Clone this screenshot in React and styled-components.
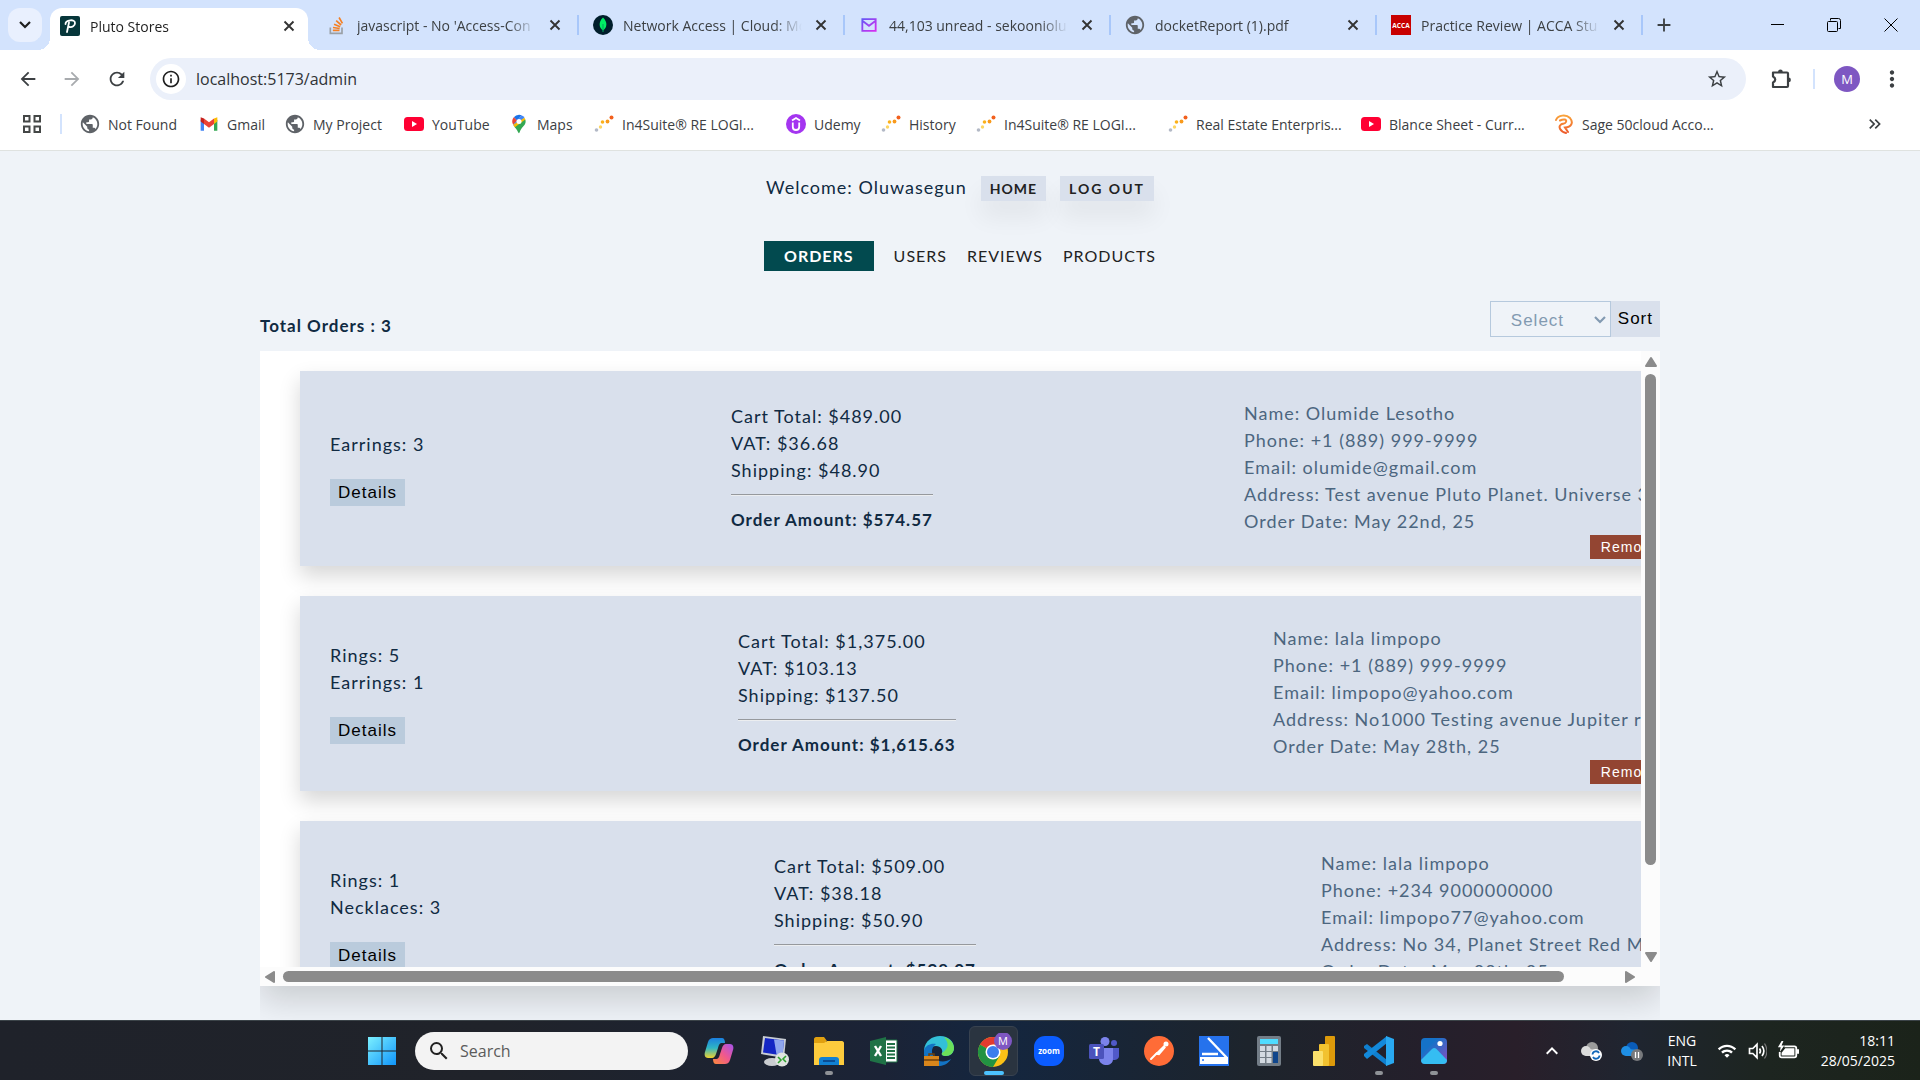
import React from "react";
import styled, { createGlobalStyle, css } from "styled-components";
import {
  MdAdd,
  MdArrowBack,
  MdArrowForward,
  MdClose,
  MdInfoOutline,
  MdKeyboardArrowDown,
  MdKeyboardArrowUp,
  MdMoreVert,
  MdPublic,
  MdRefresh,
  MdSearch,
  MdStarBorder,
  MdWifi,
  MdKeyboardDoubleArrowRight,
} from "react-icons/md";

const uiFont = `"Open Sans", "Noto Sans", sans-serif`;
const pageFont = `Lato, "Open Sans", sans-serif`;
const formFont = `"Liberation Sans", Arial, sans-serif`;

const GlobalStyle = createGlobalStyle`
  *, *::before, *::after { box-sizing: border-box; }
  body { margin: 0; background: #eff3f8; }
  button, input, select { margin: 0; border: 0; padding: 0; font: inherit; color: inherit; background: none; }
  h1, h2, p, ul { margin: 0; padding: 0; list-style: none; }
  a { color: inherit; text-decoration: none; }
`;

const Screen = styled.div`
  display: flex;
  flex-direction: column;
  height: 100vh;
  overflow: hidden;
  font-family: ${uiFont};
`;

/* ---------- browser chrome ---------- */

const TabStrip = styled.div`
  display: flex;
  align-items: center;
  height: 50px;
  flex: none;
  padding-left: 8px;
  background: #d3e3fd;
  color: #3c4043;
`;

const TabSearch = styled.button`
  display: grid;
  place-items: center;
  width: 34px;
  height: 34px;
  margin-right: 8px;
  border-radius: 12px;
  background: #e9f0fe;
  color: #1f1f1f;
`;

const Tab = styled.div`
  position: relative;
  display: flex;
  align-items: center;
  width: 266px;
  height: 36px;
  padding: 0 14px;
  font-size: 14px;
  ${(p) =>
    p.$active
      ? css`
          width: 258px;
          height: 42px;
          margin: 8px 5px 0 0;
          padding: 0 9px 6px 10px;
          border-radius: 12px 12px 0 0;
          background: #fff;
          color: #1f1f1f;
          &::before,
          &::after {
            content: "";
            position: absolute;
            bottom: 0;
            width: 12px;
            height: 12px;
          }
          &::before {
            right: 100%;
            background: radial-gradient(circle at 0 0, #d3e3fd 12px, #fff 12px);
          }
          &::after {
            left: 100%;
            background: radial-gradient(circle at 100% 0, #d3e3fd 12px, #fff 12px);
          }
        `
      : css`
          &::after {
            content: "";
            position: absolute;
            right: 0;
            top: 8px;
            width: 2px;
            height: 20px;
            background: #a8c7fa;
          }
        `}
`;

const TabTitle = styled.span`
  flex: 1;
  margin: 0 9px 0 10px;
  overflow: hidden;
  white-space: nowrap;
  mask-image: linear-gradient(90deg, #000 calc(100% - 28px), transparent);
`;

const IconButton = styled.button`
  display: grid;
  place-items: center;
  flex: none;
  width: ${(p) => p.$w || 20}px;
  height: 26px;
  color: ${(p) => p.$color || "#3c4043"};
`;

const WindowControls = styled.div`
  display: flex;
  margin-left: auto;
`;

const Toolbar = styled.div`
  display: flex;
  align-items: center;
  flex: none;
  height: 58px;
  padding: 0 6px 0 5px;
  background: #fff;
`;

const AddressBar = styled.label`
  display: flex;
  align-items: center;
  flex: 1;
  height: 42px;
  margin: 0 12px 0 10px;
  padding: 0 17px 0 6px;
  border-radius: 21px;
  background: #ebf0fa;
`;

const SiteInfo = styled.span`
  display: grid;
  place-items: center;
  width: 30px;
  height: 30px;
  margin-right: 10px;
  border-radius: 50%;
  background: #fff;
  color: #1f1f1f;
`;

const AddressInput = styled.input`
  flex: 1;
  min-width: 0;
  color: #303336;
  font-size: 16px;
  outline: 0;
`;

const Divider = styled.span`
  flex: none;
  width: 2px;
  height: 20px;
  background: #d3e3fd;
`;

const ToolbarGap = styled.span`
  display: grid;
  place-items: center;
  width: 20px;
`;

const Avatar = styled.span`
  display: grid;
  place-items: center;
  width: 26px;
  height: 26px;
  border-radius: 50%;
  background: #7e57c2;
  color: #fff;
  font-size: 13px;
`;

const BookmarkBar = styled.nav`
  display: flex;
  align-items: center;
  flex: none;
  height: 43px;
  padding: 0 35px 10px 22px;
  border-bottom: 1px solid #dfe2e0;
  background: #fff;
  color: #3c4043;
  font-size: 14px;
`;

const Bookmarks = styled.ul`
  display: flex;
  flex: 1;
  min-width: 0;
  margin: 0 0 0 18px;
`;

const BarDivider = styled(Divider)`
  margin-left: 18px;
`;

const Bookmark = styled.li`
  width: ${(p) => p.$w}px;
  white-space: nowrap;
  a {
    display: flex;
    align-items: center;
    gap: 8px;
  }
`;

/* ---------- admin page ---------- */

const Page = styled.main`
  display: flex;
  flex-direction: column;
  flex: 1;
  min-height: 0;
  padding-top: 22px;
  background: #eff3f8;
  color: #102a42;
  font-family: ${pageFont};
  font-size: 18px;
  line-height: 27px;
  letter-spacing: 1px;
`;

const Welcome = styled.header`
  display: flex;
  align-items: flex-end;
  justify-content: center;
  gap: 14px;
  height: 28px;
`;

const headerAction = css`
  padding: 0 9px;
  background: #d9e0ec;
  box-shadow: 0 16px 24px rgba(0, 0, 0, 0.06);
  color: #222;
  font-size: 14px;
  font-weight: 700;
  line-height: 25px;
`;

const HomeLink = styled.a`
  ${headerAction}
`;

const LogoutButton = styled.button`
  ${headerAction}
  letter-spacing: 2px;
`;

const Sections = styled.nav`
  display: flex;
  justify-content: center;
  gap: 20px;
  margin-top: 40px;
  color: #222;
  font-size: 16px;
  line-height: 30px;
`;

const SectionLink = styled.a`
  ${(p) =>
    p.$active &&
    css`
      padding: 0 20px;
      background: #024a4f;
      color: #fff;
      font-weight: 700;
    `}
`;

const ListHead = styled.div`
  display: flex;
  align-items: flex-end;
  justify-content: space-between;
  width: 100%;
  max-width: 1400px;
  margin: 30px auto 14px;
`;

const Total = styled.h1`
  font-size: 17px;
  line-height: 22px;
`;

const SortForm = styled.form`
  display: flex;
  height: 36px;
  font-family: ${formFont};
  font-size: 17px;
`;

const SelectBox = styled.label`
  position: relative;
  display: flex;
  color: #829ab1;
  svg {
    position: absolute;
    right: 5px;
    top: 15px;
    pointer-events: none;
  }
`;

const Select = styled.select`
  width: 121px;
  padding: 2px 20px 0;
  border: 1px solid #b6c9dd;
  appearance: none;
  letter-spacing: 1px;
`;

const SortButton = styled.button`
  padding: 0 7px 2px;
  background: #d9e0ec;
  color: #000;
  letter-spacing: 1px;
`;

const ListArea = styled.section`
  flex: 1;
  min-height: 0;
  width: 100%;
  max-width: 1400px;
  margin: 0 auto;
  padding-bottom: 34px;
  overflow: hidden;
`;

const Panel = styled.div`
  display: grid;
  grid-template: minmax(0, 1fr) 19px / minmax(0, 1fr) 19px;
  height: 100%;
  background: #fcfcfc;
  box-shadow: 0 14px 32px rgba(0, 0, 0, 0.16);
`;

const OrderScroll = styled.div`
  display: flex;
  flex-direction: column;
  gap: 30px;
  padding: 20px 0 20px 40px;
  overflow: hidden;
  background: #fff;
`;

const Scrollbar = styled.div`
  display: flex;
  align-items: center;
  justify-content: space-between;
  flex-direction: ${(p) => (p.$vertical ? "column" : "row")};
  padding: ${(p) => (p.$vertical ? "5px 0 4px" : "0 5px 0 4px")};
`;

const Track = styled.div`
  flex: 1;
  margin: ${(p) => (p.$vertical ? "6px 0" : "0 7px")};
`;

const Thumb = styled.div`
  width: ${(p) => (p.$vertical ? "11px" : p.$size)};
  height: ${(p) => (p.$vertical ? p.$size : "11px")};
  border-radius: 6px;
  background: #8b8b8b;
`;

const Order = styled.article`
  display: grid;
  grid-template-columns: ${(p) => p.$cols};
  align-items: center;
  flex: none;
  width: 1400px;
  height: 195px;
  padding: 0 30px 1px;
  background: #d9e0ec;
  box-shadow: 0 10px 20px rgba(0, 0, 0, 0.16);
  white-space: nowrap;
`;

const DetailsButton = styled.button`
  display: block;
  height: 27px;
  margin-top: 21px;
  padding: 0 8px;
  background: #bacbdc;
  color: #000;
  font-family: ${formFont};
  font-size: 17px;
  letter-spacing: 1px;
`;

const Amounts = styled.div`
  justify-self: start;
  strong {
    font-size: 17px;
  }
`;

const Rule = styled.hr`
  margin: 10px 0;
  border: 0;
  border-top: 1px solid #96999d;
  border-bottom: 1px solid #eceef0;
`;

const Contact = styled.address`
  display: flex;
  flex-direction: column;
  align-self: end;
  padding-bottom: 6px;
  color: #4c667f;
  font-style: normal;
`;

const RemoveButton = styled.button`
  align-self: flex-end;
  height: 24px;
  padding: 0 11px;
  background: #934532;
  color: #fff;
  font-family: ${formFont};
  font-size: 14px;
  line-height: 24px;
  letter-spacing: 1px;
`;

/* ---------- taskbar ---------- */

const Taskbar = styled.footer`
  display: flex;
  align-items: center;
  flex: none;
  height: 60px;
  padding: 0 25px 0 354px;
  border-top: 1px solid #3b4348;
  background: linear-gradient(
    90deg,
    #1f222a 0%,
    #20232a 26%,
    #1b2336 46%,
    #14263f 52%,
    #1d242c 65%,
    #251f2b 75%,
    #291f2a 79%,
    #1f2530 85%,
    #1d2520 92%,
    #1b231a 100%
  );
  color: #fff;
`;

const TaskButton = styled.button`
  position: relative;
  display: grid;
  place-items: center;
  flex: none;
  width: 55px;
  height: 50px;
  ${(p) =>
    p.$open &&
    css`
      &::after {
        content: "";
        position: absolute;
        bottom: 1px;
        left: 24px;
        width: 8px;
        height: 4px;
        border-radius: 2px;
        background: #8f9297;
      }
    `}
  ${(p) =>
    p.$current &&
    css`
      margin: 0 3px;
      width: 49px;
      border: 1px solid #38424f;
      border-radius: 6px;
      background: #2a3440;
      &::after {
        content: "";
        position: absolute;
        bottom: 0;
        left: 14px;
        width: 20px;
        height: 4px;
        border-radius: 2px;
        background: #4cc2ff;
      }
    `}
`;

const SearchBox = styled.label`
  display: flex;
  align-items: center;
  gap: 9px;
  width: 273px;
  height: 38px;
  margin: 0 3px 0 6px;
  padding-left: 12px;
  border-radius: 19px;
  background: #f3f3f3;
  color: #222;
`;

const SearchInput = styled.input`
  width: 200px;
  font-size: 16px;
  outline: 0;
  &::placeholder {
    color: #5b5b5b;
    opacity: 1;
  }
`;

const Tray = styled.div`
  display: flex;
  align-items: center;
  margin-left: auto;
  font-size: 14px;
  line-height: 20px;
`;

const TrayItem = styled.button`
  display: grid;
  place-items: center;
  width: ${(p) => p.$w}px;
`;

const Clock = styled.time`
  width: 91px;
  text-align: right;
`;

/* ---------- drawings ---------- */

const Svg = ({ s = 20, h, box = "0 0 24 24", children }) => (
  <svg width={s} height={h || s} viewBox={box} fill="none" aria-hidden="true">
    {children}
  </svg>
);

const PlutoIcon = () => (
  <Svg box="0 0 20 20">
    <rect width="20" height="20" rx="2" fill="#06363a" />
    <path d="M9 6.500 7 16M5.500 8C5.500 4 15 2.500 15 7c0 3-3 4.500-5.500 4" stroke="#fff" strokeWidth="1.800" strokeLinecap="round" />
  </Svg>
);
const StackIcon = () => (
  <Svg>
    <path d="M4 15v7h14v-7" stroke="#9aa0a6" strokeWidth="2" />
    <path d="M7 18.500h8M7.200 15l8 1.200M8.500 11l7.300 3M11 6.800l6 5.200M14.500 3l4 7" stroke="#f48024" strokeWidth="2" />
  </Svg>
);
const MongoIcon = () => (
  <Svg box="0 0 20 20">
    <circle cx="10" cy="10" r="10" fill="#001e2b" />
    <path d="M10 2.500c5 5 4 10 0 13-4-3-5-8 0-13Z" fill="#00ed64" />
    <path d="M10 9v8" stroke="#00a35c" />
  </Svg>
);
const MailIcon = () => (
  <Svg>
    <defs>
      <linearGradient id="mail" x1="0" y1="0" x2="1" y2="1">
        <stop stopColor="#6557f5" />
        <stop offset="1" stopColor="#d82df0" />
      </linearGradient>
    </defs>
    <path d="M4 5h16v14H4zM4 7l8 6 8-6" stroke="url(#mail)" strokeWidth="2.200" />
  </Svg>
);
const AccaIcon = () => (
  <Svg box="0 0 20 20">
    <rect width="20" height="20" fill="#c80000" />
    <text x="10" y="12.500" textAnchor="middle" fontSize="6.500" fontWeight="700" fill="#fff" fontFamily="Open Sans">ACCA</text>
  </Svg>
);
const Globe = styled(MdPublic)`
  width: 22px;
  height: 22px;
  margin: -1px;
  color: #5f6368;
`;
const GmailIcon = () => (
  <Svg>
    <path d="M2 7v13h4V10z" fill="#4285f4" />
    <path d="M18 10v10h4V7z" fill="#34a853" />
    <path d="M18 5.500 22 4v5l-4 3z" fill="#fbbc04" />
    <path d="M6 5.500 12 10l6-4.500V12l-6 4.500L6 12z" fill="#ea4335" />
    <path d="M2 4l4 1.500V12L2 9z" fill="#c5221f" />
  </Svg>
);
const YouTubeIcon = () => (
  <Svg box="0 0 20 20">
    <rect y="3" width="20" height="14" rx="3.500" fill="#ff0033" />
    <path d="m8 7 5 3-5 3z" fill="#fff" />
  </Svg>
);
const MapsIcon = () => (
  <Svg>
    <path d="M12 1a8 8 0 0 0-6.200 3L10 8l5-6.500A8 8 0 0 0 12 1Z" fill="#1a73e8" />
    <path d="M5.800 4A8 8 0 0 0 5 13l5-5z" fill="#ea4335" />
    <path d="M15 1.500 5 13l2 3L18.600 4.500A8 8 0 0 0 15 1.500Z" fill="#4285f4" />
    <path d="M5 13c1 2 2 3 3 4L19.800 7.500 18.600 4.500z" fill="#fbbc04" />
    <path d="M7 16c3 3 4 7 5 7s1-4 5-8c3-3 3.500-6 2.500-8.500z" fill="#34a853" />
    <circle cx="12" cy="9" r="3" fill="#fff" />
  </Svg>
);
const DotsIcon = () => (
  <Svg box="0 0 20 20">
    <circle cx="2.500" cy="16" r="1.800" fill="#b3b9c6" />
    <circle cx="6.500" cy="13" r="1.700" fill="#fdd663" />
    <circle cx="8.500" cy="8" r="1.800" fill="#fbb11a" />
    <circle cx="13.500" cy="7.500" r="1.900" fill="#f99a1c" />
    <circle cx="17.500" cy="3.500" r="2" fill="#f2601d" />
  </Svg>
);
const UdemyIcon = () => (
  <Svg box="0 0 20 20">
    <circle cx="10" cy="10" r="10" fill="#a435f0" />
    <path d="m6 6.500 4-2.500 4 2.500M6.800 8.500V13c0 4 6.400 4 6.400 0V8.500" stroke="#fff" strokeWidth="1.800" />
  </Svg>
);
const SageIcon = () => (
  <Svg box="0 0 20 20">
    <defs>
      <linearGradient id="sage" x1="0" y1="0" x2="0" y2="1">
        <stop stopColor="#f9a23a" />
        <stop offset="1" stopColor="#ee5a2b" />
      </linearGradient>
    </defs>
    <path d="M2 6C4 1 12 0 16 4c4 5 1 9-5 9.500L14 18M6 6.500c4-2 7-1 6 1.500-.8 2-3 1.500-5 2.500-3 2-1 7 5 8.500" stroke="url(#sage)" strokeWidth="2" strokeLinecap="round" />
  </Svg>
);
const GridIcon = () => (
  <Svg box="0 0 20 20">
    <path d="M2 2h5.500v5.500H2zM12.500 2H18v5.500h-5.500zM2 12.500h5.500V18H2zM12.500 12.500H18V18h-5.500z" stroke="#444746" strokeWidth="2" />
  </Svg>
);
const ExtensionIcon = () => (
  <Svg s={22} box="0 0 22 22">
    <path d="M3 4.500h14a1 1 0 0 1 1 1V18a1 1 0 0 1-1 1H3v-4.500c3-1.500 3-4.500 0-6z" stroke="#3c4043" strokeWidth="2.200" strokeLinejoin="round" />
    <path d="M8 4a2.400 2.400 0 0 1 4.800 0zM18.500 9.500a2.400 2.400 0 0 1 0 4.800z" fill="#3c4043" />
  </Svg>
);
const CrossIcon = () => (
  <Svg s={12} box="0 0 12 12"><path d="m1.500 1.500 9 9m0-9-9 9" stroke="#333" strokeWidth="1.900" /></Svg>
);
const ChevronIcon = ({ color }) => (
  <Svg s={12} h={8} box="0 0 12 8"><path d="m1 1 5 5 5-5" stroke={color} strokeWidth="2.200" /></Svg>
);

const WindowsIcon = () => (
  <Svg s={30} box="0 0 30 30">
    <defs>
      <linearGradient id="win" x1="0" y1="0" x2="1" y2="1">
        <stop stopColor="#7cf0ff" />
        <stop offset="1" stopColor="#1095fa" />
      </linearGradient>
    </defs>
    <path d="M1 1h13.500v13.500H1zM15.500 1H29v13.500H15.500zM1 15.500h13.500V29H1zM15.500 15.500H29V29H15.500z" fill="url(#win)" />
  </Svg>
);
const CopilotIcon = () => (
  <Svg s={30} box="0 0 30 30">
    <defs>
      <linearGradient id="cpa" x1="0" y1="0" x2="0" y2="1">
        <stop stopColor="#1b7fe0" />
        <stop offset=".5" stopColor="#2fb6c4" />
        <stop offset="1" stopColor="#f0d32e" />
      </linearGradient>
      <linearGradient id="cpb" x1="1" y1="0" x2="0" y2="1">
        <stop stopColor="#a453ee" />
        <stop offset=".5" stopColor="#f0588e" />
        <stop offset="1" stopColor="#fb8a3a" />
      </linearGradient>
    </defs>
    <path d="M9 2h9c2 0 3 2 3 5h-3c-2 0-3 1-4 5l-2 6c-.6 2-2 4-4 4H4c-3 0-4-3-3-6L4 6c1-3 3-4 5-4Z" fill="url(#cpa)" />
    <path d="M21 28h-9c-2 0-3-2-3-5h3c2 0 3-1 4-5l2-6c.6-2 2-4 4-4h4c3 0 4 3 3 6l-3 10c-1 3-3 4-5 4Z" fill="url(#cpb)" />
  </Svg>
);
const RemoteIcon = () => (
  <Svg s={32} box="0 0 32 32">
    <path d="m5 1 23 3-2 19L3 19z" fill="#c7ccd4" />
    <path d="m7 3 19 2.500-1.500 15L5 17.500z" fill="#1426c4" />
    <path d="m16 4.500 10 1-1.500 15-6-1z" fill="#8fa6ee" />
    <ellipse cx="14" cy="27" rx="8" ry="4" fill="#c9ccd0" />
    <circle cx="24" cy="24.500" r="7" fill="#dfe3df" />
    <path d="m20 22 3 3-3 3m8-7-3 3 3 3" stroke="#2fa12f" strokeWidth="1.600" />
  </Svg>
);
const FolderIcon = () => (
  <Svg s={32} box="0 0 32 32">
    <path d="M1 4c0-1 1-2 2-2h8l3 4h-1v6H1z" fill="#e0a010" />
    <path d="M1 8h10l3-2h15c1 0 2 1 2 2v22H1z" fill="#fdcb3d" />
    <path d="M6 30v-5c0-2 1-3 3-3h14c2 0 3 1 3 3v5z" fill="#1180d2" />
    <path d="M10 26h12" stroke="#0a4d94" strokeWidth="2" />
  </Svg>
);
const ExcelIcon = () => (
  <Svg s={28} box="0 0 28 28">
    <path d="M14 3h13v22H14z" fill="#fff" stroke="#1f7246" />
    <path d="M17 7h8M17 10.500h8M17 14h8M17 17.500h8M17 21h8" stroke="#1f7246" strokeWidth="2" />
    <path d="M0 4 16 0v28L0 24z" fill="#1f7246" />
    <path d="m5 9 6 10M11 9 5 19" stroke="#fff" strokeWidth="2.400" />
  </Svg>
);
const EdgeIcon = () => (
  <Svg s={30} box="0 0 30 30">
    <path d="M0 14C1 5 8 0 16 0c9 0 14 6 14 12 0 5-4 8-8 8-3 0-5-1-4-3 1-3-1-7-6-7C6 10 3 14 0 20z" fill="#33c0d8" />
    <path d="M20 1c7 2 10 7 10 11 0 5-4 8-8 8-3 0-5-1-4-3 6-4 8-9 2-16z" fill="#6be05a" />
    <path d="M0 14c2-5 7-7 12-6-5 4-5 9-2 13 3 5 11 6 17 2-4 7-13 9-19 5C2 25-1 20 0 14Z" fill="#1373c4" />
    <rect y="20" width="15" height="10" fill="#d8861c" />
    <path d="M0 24h15M5 20v-2h5v2" stroke="#704008" strokeWidth="1.500" />
  </Svg>
);
const ChromeIcon = () => (
  <Svg s={36} box="0 0 36 36">
    <circle cx="17" cy="19" r="15" fill="#fbc116" />
    <path d="M17 19 4 11.500A15 15 0 0 1 30 11.500H17z" fill="#e33b2e" />
    <path d="M17 19 4 11.500A15 15 0 0 0 17 34l6.500-11z" fill="#229342" />
    <circle cx="17" cy="19" r="7.500" fill="#fff" />
    <circle cx="17" cy="19" r="6" fill="#3b7ded" />
    <circle cx="27" cy="8" r="9" fill="#7e57c2" />
    <text x="27" y="12" textAnchor="middle" fontSize="11" fill="#fff" fontFamily="Open Sans">M</text>
  </Svg>
);
const ZoomIcon = () => (
  <Svg s={30} box="0 0 30 30">
    <rect width="30" height="30" rx="11" fill="#0b5cff" />
    <text x="15" y="17.500" textAnchor="middle" fontSize="8" fontWeight="700" fill="#fff" fontFamily="Open Sans">zoom</text>
  </Svg>
);
const TeamsIcon = () => (
  <Svg s={30} box="0 0 30 30">
    <circle cx="25" cy="7" r="3" fill="#5059c9" />
    <path d="M20 12h10v8c0 4-6 5-8 3z" fill="#5059c9" />
    <circle cx="16" cy="5.500" r="4.500" fill="#7b83eb" />
    <path d="M10 12h14v11c0 8-13 8-14 0z" fill="#7b83eb" />
    <rect y="8" width="15" height="15" rx="1.500" fill="#4b53bc" />
    <text x="7.500" y="20" textAnchor="middle" fontSize="12" fontWeight="700" fill="#fff" fontFamily="Open Sans">T</text>
  </Svg>
);
const PostmanIcon = () => (
  <Svg s={30} box="0 0 30 30">
    <circle cx="15" cy="15" r="15" fill="#ff6c37" />
    <circle cx="22" cy="8" r="2.500" fill="#fff" />
    <path d="m20 10-8 8 3 .5 6-7z" fill="#fff" stroke="#fff" strokeWidth="1.500" />
    <path d="m13 17-6 6" stroke="#fff" strokeWidth="2" strokeLinecap="round" />
  </Svg>
);
const ScannerIcon = () => (
  <Svg s={30} box="0 0 30 30">
    <rect width="30" height="30" fill="#2672ec" />
    <path d="M1 21h28v7H1z" fill="#fff" />
    <path d="m9 2 19 20M3 18h16" stroke="#fff" strokeWidth="2.400" />
    <path d="M3 24h2" stroke="#2672ec" strokeWidth="1.500" />
  </Svg>
);
const CalcIcon = () => (
  <Svg s={30} box="0 0 30 30">
    <rect x="3" width="24" height="30" rx="2" fill="#737d87" />
    <path d="M6 3h18v5H6z" fill="#4fdcff" />
    <path d="M6 10h5v5H6zM12.500 10h5v5h-5zM19 10h5v5h-5zM6 16h5v5H6zM12.500 16h5v5h-5zM6 22h5v5H6zM12.500 22h5v5h-5z" fill="#d3dae2" />
    <path d="M19 16h5v11h-5z" fill="#10468c" />
  </Svg>
);
const PowerBiIcon = () => (
  <Svg s={30} box="0 0 30 30">
    <rect x="16" width="10" height="30" rx="1" fill="#dd9a0a" />
    <rect x="10" y="8" width="10" height="22" rx="1" fill="#f2c230" />
    <rect x="4" y="15" width="10" height="15" rx="1" fill="#fbe06c" />
  </Svg>
);
const CodeIcon = () => (
  <Svg s={30} box="0 0 30 30">
    <path d="m0 10 3-2 20 16v6L0 12z" fill="#0f7fcf" />
    <path d="m0 20 3 3L23 7V0L0 18z" fill="#1389da" />
    <path d="m22 0 8 3v24l-8 3z" fill="#29a9f1" />
  </Svg>
);
const PhotosIcon = () => (
  <Svg s={30} box="0 0 30 30">
    <defs>
      <linearGradient id="ph" x1="0" y1="0" x2="1" y2="1">
        <stop offset=".3" stopColor="#1572c8" />
        <stop offset="1" stopColor="#8c4bc0" />
      </linearGradient>
    </defs>
    <rect x="2" y="2" width="26" height="26" rx="4" fill="url(#ph)" />
    <path d="M2 24 13 13c1.500-1.500 3-1.500 4.500 0L28 24c0 3-2 4-4 4H6c-2 0-4-1-4-4Z" fill="#35bdf2" />
    <circle cx="21" cy="7.500" r="2.600" fill="#fff" />
  </Svg>
);
const CloudIcon = ({ color, light, children }) => (
  <Svg s={22} box="0 0 22 22">
    <circle cx="11" cy="8" r="6" fill={color} />
    <circle cx="5" cy="11" r="5" fill={light} />
    <path d="M5 16a4 4 0 0 1 2-7l11 1v6z" fill={light} />
    {children}
  </Svg>
);
const VolumeIcon = () => (
  <Svg s={20}>
    <path d="M3 9v6h4l5 5V4L7 9zM15 9c1.500 2 1.500 4 0 6M18 6c3 4 3 8 0 12" stroke="#fff" strokeWidth="2" />
    <path d="M21 3c4 6 4 12 0 18" stroke="#777" strokeWidth="1.500" />
  </Svg>
);
const BatteryIcon = () => (
  <Svg s={22}>
    <path d="M8 7h11c1 0 2 1 2 2v8c0 1-1 2-2 2H5c-1 0-2-1-2-2v-4" stroke="#fff" strokeWidth="2" />
    <path d="M9 9h10v8H5v-3zM21 10h3v5h-3z" fill="#fff" />
    <path d="M5 1 1 8h3l-1 5 5-7H5l2-5z" fill="#fff" />
  </Svg>
);

/* ---------- data ---------- */

const tabs = [
  { title: "Pluto Stores", Icon: PlutoIcon, active: true },
  { title: "javascript - No 'Access-Con", Icon: StackIcon },
  { title: "Network Access | Cloud: Mo", Icon: MongoIcon },
  { title: "44,103 unread - sekooniolu", Icon: MailIcon },
  { title: "docketReport (1).pdf", Icon: Globe },
  { title: "Practice Review | ACCA Stu", Icon: AccaIcon },
];

const bookmarks = [
  ["Not Found", Globe, 119],
  ["Gmail", GmailIcon, 86],
  ["My Project", Globe, 119],
  ["YouTube", YouTubeIcon, 105],
  ["Maps", MapsIcon, 85],
  ["In4Suite® RE LOGI...", DotsIcon, 192],
  ["Udemy", UdemyIcon, 95],
  ["History", DotsIcon, 95],
  ["In4Suite® RE LOGI...", DotsIcon, 192],
  ["Real Estate Enterpris...", DotsIcon, 193],
  ["Blance Sheet - Curr...", YouTubeIcon, 193],
  ["Sage 50cloud Acco...", SageIcon, 193],
];

const orders = [
  {
    items: ["Earrings: 3"],
    total: "$489.00",
    vat: "$36.68",
    shipping: "$48.90",
    amount: "$574.57",
    cols: "401px 513px minmax(0, 1fr)",
    contact: ["Name: Olumide Lesotho", "Phone: +1 (889) 999-9999", "Email: olumide@gmail.com", "Address: Test avenue Pluto Planet. Universe 3", "Order Date: May 22nd, 25"],
  },
  {
    items: ["Rings: 5", "Earrings: 1"],
    total: "$1,375.00",
    vat: "$103.13",
    shipping: "$137.50",
    amount: "$1,615.63",
    cols: "408px 535px minmax(0, 1fr)",
    contact: ["Name: lala limpopo", "Phone: +1 (889) 999-9999", "Email: limpopo@yahoo.com", "Address: No1000 Testing avenue Jupiter road", "Order Date: May 28th, 25"],
  },
  {
    items: ["Rings: 1", "Necklaces: 3"],
    total: "$509.00",
    vat: "$38.18",
    shipping: "$50.90",
    amount: "$598.07",
    cols: "444px 547px minmax(0, 1fr)",
    contact: ["Name: lala limpopo", "Phone: +234 9000000000", "Email: limpopo77@yahoo.com", "Address: No 34, Planet Street Red Mars", "Order Date: May 28th, 25"],
  },
];

const tasks = [
  ["Copilot", CopilotIcon],
  ["Remote Desktop", RemoteIcon],
  ["File Explorer", FolderIcon, "open"],
  ["Excel", ExcelIcon],
  ["Edge", EdgeIcon],
  ["Chrome", ChromeIcon, "current"],
  ["Zoom", ZoomIcon],
  ["Teams", TeamsIcon],
  ["Postman", PostmanIcon],
  ["Scan", ScannerIcon],
  ["Calculator", CalcIcon],
  ["Power BI", PowerBiIcon],
  ["Visual Studio Code", CodeIcon, "open"],
  ["Photos", PhotosIcon, "open"],
];

const Arrow = ({ turn }) => (
  <svg width="12" height="12" viewBox="0 0 12 12" aria-hidden="true">
    <path d="M6 2 11 10H1z" fill="#8b8b8b" stroke="#8b8b8b" strokeLinejoin="round" strokeWidth="2" transform={`rotate(${turn} 6 6)`} />
  </svg>
);

const BrowserChrome = () => (
  <>
    <TabStrip>
      <TabSearch aria-label="Search tabs">
        <ChevronIcon color="#1f1f1f" />
      </TabSearch>
      {tabs.map(({ title, Icon, active }) => (
        <Tab key={title} $active={active}>
          <Icon />
          <TabTitle>{title}</TabTitle>
          <IconButton aria-label="Close tab">
            <CrossIcon />
          </IconButton>
        </Tab>
      ))}
      <IconButton aria-label="New tab" $w={42}>
        <MdAdd size={22} />
      </IconButton>
      <WindowControls>
        <IconButton aria-label="Minimise" $w={57}>
          <Svg s={14} box="0 0 14 14"><path d="M0 6.500h13" stroke="#000" /></Svg>
        </IconButton>
        <IconButton aria-label="Restore" $w={56}>
          <Svg s={14} box="0 0 14 14"><path d="M3.500 2.500V.5h8q2 0 2 2v8h-2M1.500 3.500h8q1 0 1 1v8q0 1-1 1h-8q-1 0-1-1v-8q0-1 1-1Z" stroke="#000" /></Svg>
        </IconButton>
        <IconButton aria-label="Close" $w={58}>
          <Svg s={14} box="0 0 14 14"><path d="m.5.5 13 13m0-13-13 13" stroke="#000" /></Svg>
        </IconButton>
      </WindowControls>
    </TabStrip>
    <Toolbar>
      <IconButton aria-label="Back" $w={45}><MdArrowBack size={22} /></IconButton>
      <IconButton aria-label="Forward" $w={44} $color="#a8abae"><MdArrowForward size={22} /></IconButton>
      <IconButton aria-label="Reload" $w={46}><MdRefresh size={22} /></IconButton>
      <AddressBar>
        <SiteInfo><MdInfoOutline size={20} /></SiteInfo>
        <AddressInput aria-label="Address" defaultValue="localhost:5173/admin" />
        <IconButton aria-label="Bookmark" $w={24}><MdStarBorder size={22} /></IconButton>
      </AddressBar>
      <IconButton aria-label="Extensions" $w={46}><ExtensionIcon /></IconButton>
      <ToolbarGap><Divider /></ToolbarGap>
      <IconButton aria-label="Profile" $w={46}><Avatar>M</Avatar></IconButton>
      <IconButton aria-label="Menu" $w={44}><MdMoreVert size={26} /></IconButton>
    </Toolbar>
    <BookmarkBar>
      <IconButton aria-label="Apps"><GridIcon /></IconButton>
      <BarDivider />
      <Bookmarks>
        {bookmarks.map(([label, Icon, w], i) => (
          <Bookmark key={i} $w={w}>
            <a href="#bookmark"><Icon />{label}</a>
          </Bookmark>
        ))}
      </Bookmarks>
      <IconButton aria-label="More bookmarks"><MdKeyboardDoubleArrowRight size={20} /></IconButton>
    </BookmarkBar>
  </>
);

const OrderCard = ({ order }) => (
  <Order $cols={order.cols}>
    <div>
      {order.items.map((item) => <p key={item}>{item}</p>)}
      <DetailsButton>Details</DetailsButton>
    </div>
    <Amounts>
      <p>Cart Total: {order.total}</p>
      <p>VAT: {order.vat}</p>
      <p>Shipping: {order.shipping}</p>
      <Rule />
      <p><strong>Order Amount: {order.amount}</strong></p>
    </Amounts>
    <Contact>
      {order.contact.map((line) => <p key={line}>{line}</p>)}
      <RemoveButton>Remove</RemoveButton>
    </Contact>
  </Order>
);

export default function App() {
  return (
    <Screen>
      <GlobalStyle />
      <BrowserChrome />
      <Page>
        <Welcome>
          <p>Welcome: Oluwasegun</p>
          <HomeLink href="#home">HOME</HomeLink>
          <LogoutButton>LOG OUT</LogoutButton>
        </Welcome>
        <Sections>
          <SectionLink href="#orders" $active>ORDERS</SectionLink>
          <SectionLink href="#users">USERS</SectionLink>
          <SectionLink href="#reviews">REVIEWS</SectionLink>
          <SectionLink href="#products">PRODUCTS</SectionLink>
        </Sections>
        <ListHead>
          <Total>Total Orders : 3</Total>
          <SortForm onSubmit={(e) => e.preventDefault()}>
            <SelectBox>
              <Select aria-label="Sort by">
                <option>Select</option>
              </Select>
              <ChevronIcon color="#829ab1" />
            </SelectBox>
            <SortButton>Sort</SortButton>
          </SortForm>
        </ListHead>
        <ListArea>
          <Panel>
            <OrderScroll>
              {orders.map((order) => <OrderCard key={order.amount} order={order} />)}
            </OrderScroll>
            <Scrollbar $vertical>
              <Arrow turn={0} />
              <Track $vertical><Thumb $vertical $size="86%" /></Track>
              <Arrow turn={180} />
            </Scrollbar>
            <Scrollbar>
              <Arrow turn={-90} />
              <Track><Thumb $size="96%" /></Track>
              <Arrow turn={90} />
            </Scrollbar>
          </Panel>
        </ListArea>
      </Page>
      <Taskbar>
        <TaskButton aria-label="Start"><WindowsIcon /></TaskButton>
        <SearchBox>
          <MdSearch size={24} />
          <SearchInput placeholder="Search" aria-label="Search" />
        </SearchBox>
        {tasks.map(([name, Icon, state]) => (
          <TaskButton key={name} aria-label={name} $open={state === "open"} $current={state === "current"}>
            <Icon />
          </TaskButton>
        ))}
        <Tray>
          <TrayItem $w={40} aria-label="Hidden icons"><MdKeyboardArrowUp size={24} /></TrayItem>
          <TrayItem $w={40} aria-label="Cloud sync">
            <CloudIcon color="#9b9b9b" light="#dcdcdc">
              <circle cx="15" cy="15" r="6" fill="#fff" />
              <path d="M11.500 14.500a3.500 3.500 0 0 1 6.500-1.500M18.500 15.500A3.500 3.500 0 0 1 12 17" stroke="#1267b8" strokeWidth="1.800" />
            </CloudIcon>
          </TrayItem>
          <TrayItem $w={40} aria-label="OneDrive">
            <CloudIcon color="#0a5cb8" light="#1f8fe5">
              <circle cx="16" cy="15" r="6" fill="#77797c" />
              <path d="M14.500 12v6M17.500 12v6" stroke="#fff" strokeWidth="1.300" />
            </CloudIcon>
          </TrayItem>
          <TrayItem $w={60}>ENG<br />INTL</TrayItem>
          <TrayItem $w={30} aria-label="Network"><MdWifi size={20} /></TrayItem>
          <TrayItem $w={30} aria-label="Volume"><VolumeIcon /></TrayItem>
          <TrayItem $w={32} aria-label="Battery"><BatteryIcon /></TrayItem>
          <Clock>18:11<br />28/05/2025</Clock>
        </Tray>
      </Taskbar>
    </Screen>
  );
}
